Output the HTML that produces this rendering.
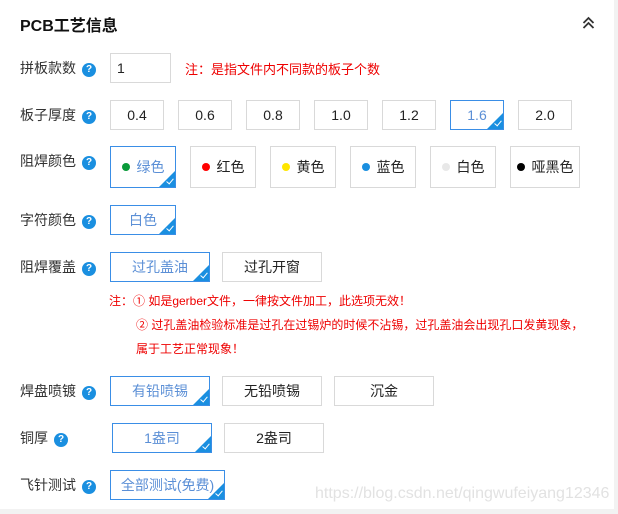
<!DOCTYPE html>
<html><head><meta charset="utf-8"><style>
body{margin:0;width:618px;height:514px;position:relative;background:#fff;font-family:"Liberation Sans","Noto Sans CJK SC",sans-serif;overflow:hidden;color:#222}
.a{position:absolute}
.rs{right:0;top:0;width:4px;height:514px;background:#f2f2f2}
.bs{left:0;bottom:0;width:618px;height:5px;background:#f2f2f2}
.lbl{position:absolute;left:20px;font-size:14px;color:#333;line-height:16px}
.q{display:inline-block;width:14px;height:14px;border-radius:50%;background:#1a8fe0;color:#fff;font-size:10px;font-weight:bold;text-align:center;line-height:14px;vertical-align:1px;margin-left:6px}
.b{position:absolute;box-sizing:border-box;border:1px solid #d9d9d9;font-size:14px;text-align:center;color:#222;overflow:hidden}
.s{border-color:#3a8ee6;color:#5b8fd6}
.s:after{content:"";position:absolute;right:0;bottom:0;border-style:solid;border-width:0 0 16px 16px;border-color:transparent transparent #1a8fe0 transparent}
.s:before{content:"";position:absolute;right:3px;bottom:3px;width:3px;height:6px;border:solid #fff;border-width:0 1.5px 1.5px 0;transform:rotate(40deg);z-index:2}
.d{display:inline-block;width:8px;height:8px;border-radius:50%;margin-right:7px;vertical-align:1px}
.red{position:absolute;color:#e00;font-size:12px}
</style></head><body>
<div class="rs a"></div><div class="bs a"></div>
<div class="a" style="left:20px;top:12px;font-size:16px;font-weight:bold;color:#111">PCB工艺信息</div>
<svg class="a" style="left:582px;top:16px" width="13" height="13" viewBox="0 0 13 13"><path d="M1.5 7 L6.5 2 L11.5 7 M1.5 12 L6.5 7 L11.5 12" fill="none" stroke="#333" stroke-width="1.8"/></svg>

<div class="lbl" style="top:60px">拼板款数<span class="q">?</span></div>
<div class="b" style="left:110px;top:53px;width:61px;height:30px;line-height:28px;text-align:left;padding-left:6px">1</div>
<div class="a" style="left:185px;top:59px;font-size:13px;color:#e00">注：是指文件内不同款的板子个数</div>

<div class="lbl" style="top:107px">板子厚度<span class="q">?</span></div>
<div class="b" style="left:110px;top:100px;width:54px;height:30px;line-height:28px">0.4</div>
<div class="b" style="left:178px;top:100px;width:54px;height:30px;line-height:28px">0.6</div>
<div class="b" style="left:246px;top:100px;width:54px;height:30px;line-height:28px">0.8</div>
<div class="b" style="left:314px;top:100px;width:54px;height:30px;line-height:28px">1.0</div>
<div class="b" style="left:382px;top:100px;width:54px;height:30px;line-height:28px">1.2</div>
<div class="b s" style="left:450px;top:100px;width:54px;height:30px;line-height:28px">1.6</div>
<div class="b" style="left:518px;top:100px;width:54px;height:30px;line-height:28px">2.0</div>

<div class="lbl" style="top:153px">阻焊颜色<span class="q">?</span></div>
<div class="b s" style="left:110px;top:146px;width:66px;height:42px;line-height:40px"><span class="d" style="background:#0a9a3a"></span>绿色</div>
<div class="b" style="left:190px;top:146px;width:66px;height:42px;line-height:40px"><span class="d" style="background:#f00"></span>红色</div>
<div class="b" style="left:270px;top:146px;width:66px;height:42px;line-height:40px"><span class="d" style="background:#ffe600"></span>黄色</div>
<div class="b" style="left:350px;top:146px;width:66px;height:42px;line-height:40px"><span class="d" style="background:#1a8fe0"></span>蓝色</div>
<div class="b" style="left:430px;top:146px;width:66px;height:42px;line-height:40px"><span class="d" style="background:#e8e8e8"></span>白色</div>
<div class="b" style="left:510px;top:146px;width:70px;height:42px;line-height:40px"><span class="d" style="background:#000"></span>哑黑色</div>

<div class="lbl" style="top:212px">字符颜色<span class="q">?</span></div>
<div class="b s" style="left:110px;top:205px;width:66px;height:30px;line-height:28px">白色</div>

<div class="lbl" style="top:259px">阻焊覆盖<span class="q">?</span></div>
<div class="b s" style="left:110px;top:252px;width:100px;height:30px;line-height:28px">过孔盖油</div>
<div class="b" style="left:222px;top:252px;width:100px;height:30px;line-height:28px">过孔开窗</div>
<div class="red" style="left:109px;top:292px">注：① 如是gerber文件，一律按文件加工，此选项无效！</div>
<div class="red" style="left:136px;top:316px">② 过孔盖油检验标准是过孔在过锡炉的时候不沾锡，过孔盖油会出现孔口发黄现象，</div>
<div class="red" style="left:136px;top:340px">属于工艺正常现象！</div>

<div class="lbl" style="top:383px">焊盘喷镀<span class="q">?</span></div>
<div class="b s" style="left:110px;top:376px;width:100px;height:30px;line-height:28px">有铅喷锡</div>
<div class="b" style="left:222px;top:376px;width:100px;height:30px;line-height:28px">无铅喷锡</div>
<div class="b" style="left:334px;top:376px;width:100px;height:30px;line-height:28px">沉金</div>

<div class="lbl" style="top:430px">铜厚<span class="q">?</span></div>
<div class="b s" style="left:112px;top:423px;width:100px;height:30px;line-height:28px">1盎司</div>
<div class="b" style="left:224px;top:423px;width:100px;height:30px;line-height:28px">2盎司</div>

<div class="lbl" style="top:477px">飞针测试<span class="q">?</span></div>
<div class="b s" style="left:110px;top:470px;width:115px;height:30px;line-height:28px">全部测试(免费)</div>
<div class="a" style="left:315px;top:485px;font-size:16px;color:#e2e2e2">https://blog.csdn.net/qingwufeiyang12346</div>
</body></html>
